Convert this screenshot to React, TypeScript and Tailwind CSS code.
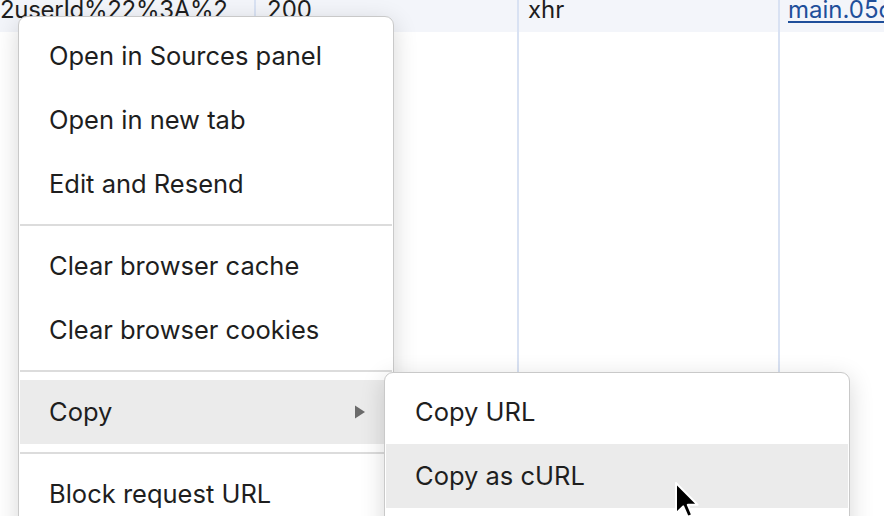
import React from 'react'

type Entry = { label: string; active?: boolean; submenu?: boolean } | 'sep'

const mainMenu: Entry[] = [
  { label: 'Open in Sources panel' },
  { label: 'Open in new tab' },
  { label: 'Edit and Resend' },
  'sep',
  { label: 'Clear browser cache' },
  { label: 'Clear browser cookies' },
  'sep',
  { label: 'Copy', active: true, submenu: true },
  'sep',
  { label: 'Block request URL' },
  { label: 'Block request domain' },
]

const copyMenu: Entry[] = [
  { label: 'Copy URL' },
  { label: 'Copy as cURL', active: true },
  { label: 'Copy as fetch' },
  { label: 'Copy response' },
]

const Cell = ({ className, children }: { className: string; children: React.ReactNode }) => (
  <div className={`flex h-full shrink-0 flex-col overflow-hidden border-r-2 border-[#d9e2f3] ${className}`}>
    <div className="h-[32px] shrink-0 overflow-hidden bg-[#f3f5fa]">
      <div className="-mt-[2px] whitespace-nowrap text-[24px] leading-[24px]">{children}</div>
    </div>
  </div>
)

const Menu = ({ items, className }: { items: Entry[]; className: string }) => (
  <div className={`absolute rounded-[9px] border border-[#c9c9c9] bg-white px-px pt-[7px] pb-[7px] shadow-[0_6px_24px_rgba(0,0,0,0.16)] ${className}`}>
    {items.map((item, i) =>
      item === 'sep' ? (
        <div key={i} className="my-[8px] h-[2px] bg-[#dcdcdc]" />
      ) : (
        <div
          key={i}
          className={`flex h-[64px] items-center justify-between pl-[29px] pr-[26px] text-[25.5px] ${item.active ? 'bg-[#ebebeb]' : ''}`}
        >
          <span className="whitespace-nowrap">{item.label}</span>
          {item.submenu && (
            <svg width="12" height="14" viewBox="0 0 12 14" className="text-[#6b6b6b]">
              <path d="M1 0.5 11 7 1 13.5Z" fill="currentColor" />
            </svg>
          )}
        </div>
      ),
    )}
  </div>
)

const Cursor = () => (
  <svg className="absolute left-[674px] top-[481px]" width="26" height="38" viewBox="0 0 13 19">
    <path
      d="M1 1v15.2l3.6-3.5 2.3 5.3 2.2-1-2.2-5.1h4.9Z"
      fill="#000"
      stroke="#fff"
      strokeWidth="1"
      strokeLinejoin="round"
    />
  </svg>
)

export default function App() {
  return (
    <div className="relative h-[516px] w-[884px] overflow-hidden bg-white font-['Inter','Noto_Sans',sans-serif] text-[#1e1e1e]">
      <div className="flex h-full">
        <Cell className="w-[256px]">
          <span className="tracking-[-0.3px]">2userId%22%3A%2</span>
        </Cell>
        <Cell className="w-[263px]">
          <span className="pl-[11px]">200</span>
        </Cell>
        <Cell className="w-[261px]">
          <span className="pl-[9px]">xhr</span>
        </Cell>
        <div className="flex h-full min-w-0 flex-1 flex-col">
          <div className="h-[32px] shrink-0 overflow-hidden bg-[#f3f5fa]">
            <div className="-mt-[2px] whitespace-nowrap pl-[8px] text-[24px] leading-[24px] text-[#1f4f9a] underline underline-offset-[3px]">
              main.05c3e1a.js
            </div>
          </div>
        </div>
      </div>

      <Menu items={mainMenu} className="left-[18px] top-[16px] w-[376px]" />
      <Menu items={copyMenu} className="left-[384px] top-[372px] w-[466px]" />
      <Cursor />
    </div>
  )
}
